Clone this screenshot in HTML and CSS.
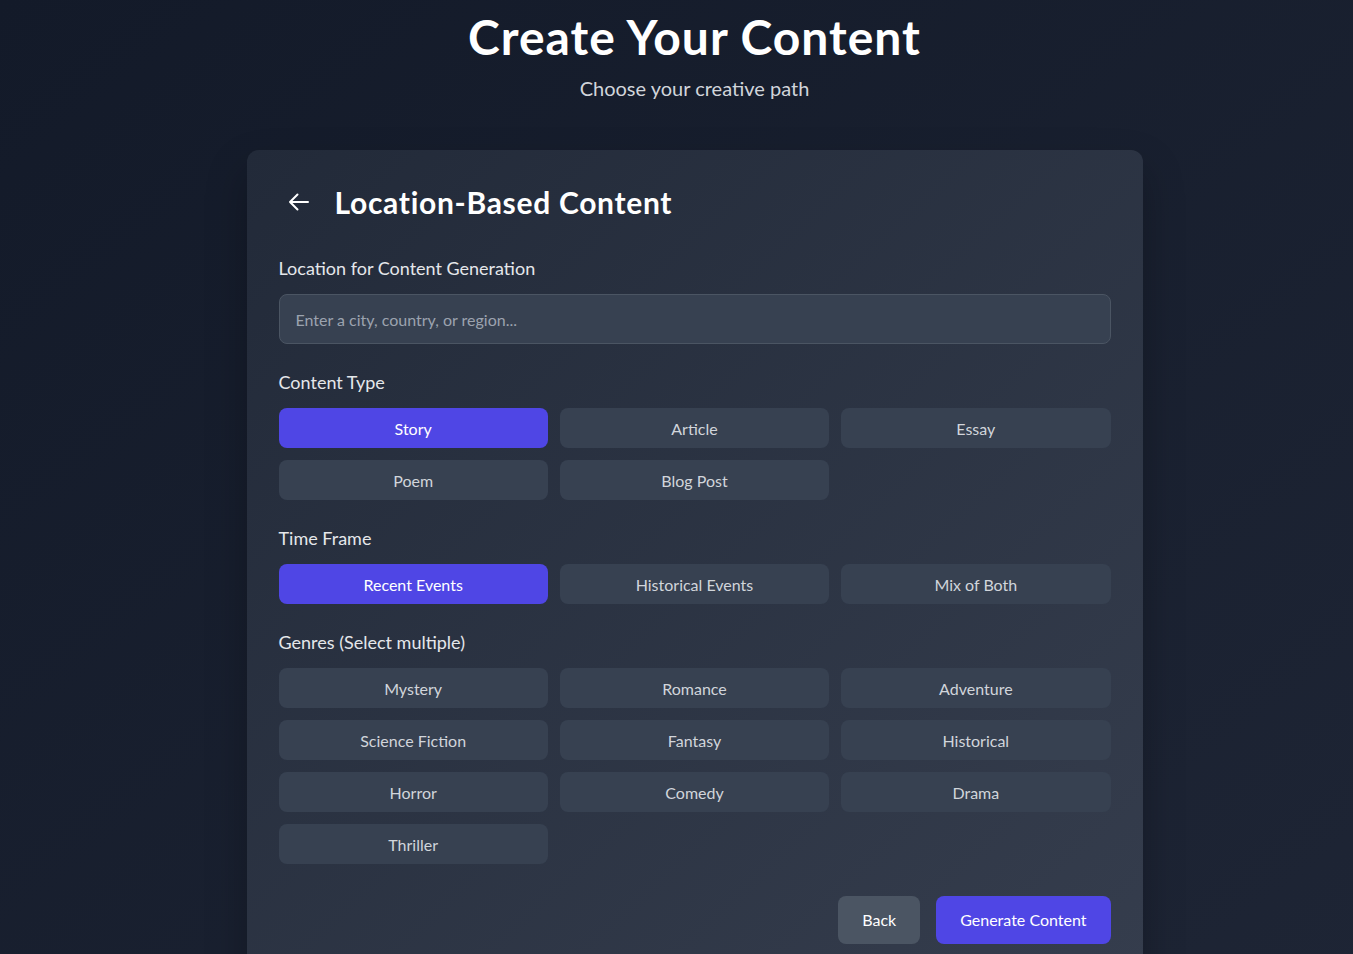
FILE: index.html
```html
<html>
<head>
    <link rel="stylesheet" href="styles.css">
</head>
<body>
    <div class="page">
        <header class="page-header">
            <h1>Create Your Content</h1>
            <p>Choose your creative path</p>
        </header>

        <div class="card">
            <div class="card-title">
                <button class="icon-btn" aria-label="Back">
                    <svg width="24" height="24" viewBox="0 0 24 24" fill="none" stroke="currentColor" stroke-width="2" stroke-linecap="round" stroke-linejoin="round">
                        <path d="M10.5 19.5 3 12m0 0 7.5-7.5M3 12h18"/>
                    </svg>
                </button>
                <h2>Location-Based Content</h2>
            </div>

            <div class="section">
                <label for="location">Location for Content Generation</label>
                <input id="location" type="text" placeholder="Enter a city, country, or region..."/>
            </div>

            <div class="section">
                <label>Content Type</label>
                <div class="options">
                    <button class="option active">Story</button>
                    <button class="option">Article</button>
                    <button class="option">Essay</button>
                    <button class="option">Poem</button>
                    <button class="option">Blog Post</button>
                </div>
            </div>

            <div class="section">
                <label>Time Frame</label>
                <div class="options">
                    <button class="option active">Recent Events</button>
                    <button class="option">Historical Events</button>
                    <button class="option">Mix of Both</button>
                </div>
            </div>

            <div class="section">
                <label>Genres (Select multiple)</label>
                <div class="options">
                    <button class="option">Mystery</button>
                    <button class="option">Romance</button>
                    <button class="option">Adventure</button>
                    <button class="option">Science Fiction</button>
                    <button class="option">Fantasy</button>
                    <button class="option">Historical</button>
                    <button class="option">Horror</button>
                    <button class="option">Comedy</button>
                    <button class="option">Drama</button>
                    <button class="option">Thriller</button>
                </div>
            </div>

            <div class="actions">
                <button class="btn btn-secondary">Back</button>
                <button class="btn btn-primary">Generate Content</button>
            </div>
        </div>
    </div>
</body>
</html>
```

FILE: styles.css
```css
html, body {
    margin: 0;
    min-height: 100%;
}

body {
    font-family: Lato, "Open Sans", sans-serif;
    background: linear-gradient(to bottom right, #131a29, #1e2535);
    color: #fff;
}

/* content sits a little right of the window centre */
.page {
    padding: 13px 0 48px 36px;
}

.page-header {
    text-align: center;
    margin-bottom: 48px;
}

.page-header h1 {
    margin: 0 0 13px;
    font-size: 48px;
    line-height: 48px;
    font-weight: 700;
    letter-spacing: 1px;
}

.page-header p {
    margin: 0;
    font-size: 20px;
    line-height: 28px;
    color: #d1d5db;
}

.card {
    width: 896px;
    box-sizing: border-box;
    margin: 0 auto;
    padding: 32px;
    border-radius: 12px;
    background: linear-gradient(to bottom right, #222a39, #353d4d);
    box-shadow: 0 20px 40px rgba(0, 0, 0, .25);
}

.card-title {
    display: flex;
    align-items: center;
    gap: 16px;
    margin-bottom: 32px;
}

.card-title h2 {
    margin: 0;
    font-size: 30px;
    line-height: 36px;
    font-weight: 700;
    letter-spacing: .7px;
}

.icon-btn {
    display: flex;
    padding: 8px;
    background: none;
    border: none;
    border-radius: 8px;
    color: #fff;
    cursor: pointer;
}

.section {
    display: flex;
    flex-direction: column;
    margin-bottom: 24px;
}

.section label {
    font-size: 18px;
    line-height: 28px;
    color: #e5e7eb;
    margin-bottom: 12px;
}

.section input {
    height: 50px;
    box-sizing: border-box;
    padding: 0 16px;
    font-family: inherit;
    font-size: 16px;
    color: #fff;
    background: #374151;
    border: 1px solid #4b5563;
    border-radius: 8px;
    outline: none;
}

.section input::placeholder {
    color: #9ca3af;
}

.options {
    display: grid;
    grid-template-columns: repeat(3, 1fr);
    gap: 12px;
}

.option {
    height: 40px;
    padding-bottom: 1px;
    font-family: inherit;
    font-size: 16px;
    color: #d1d5db;
    background: #374151;
    border: none;
    border-radius: 8px;
    cursor: pointer;
}

.option.active {
    background: #4f46e5;
    color: #fff;
}

.actions {
    display: flex;
    justify-content: flex-end;
    gap: 16px;
    margin-top: 32px;
}

.btn {
    height: 48px;
    padding: 0 24px 1px;
    font-family: inherit;
    font-size: 16px;
    color: #fff;
    border: none;
    border-radius: 8px;
    cursor: pointer;
}

.btn-secondary {
    background: #4b5563;
}

.btn-primary {
    background: #4f46e5;
}
```
